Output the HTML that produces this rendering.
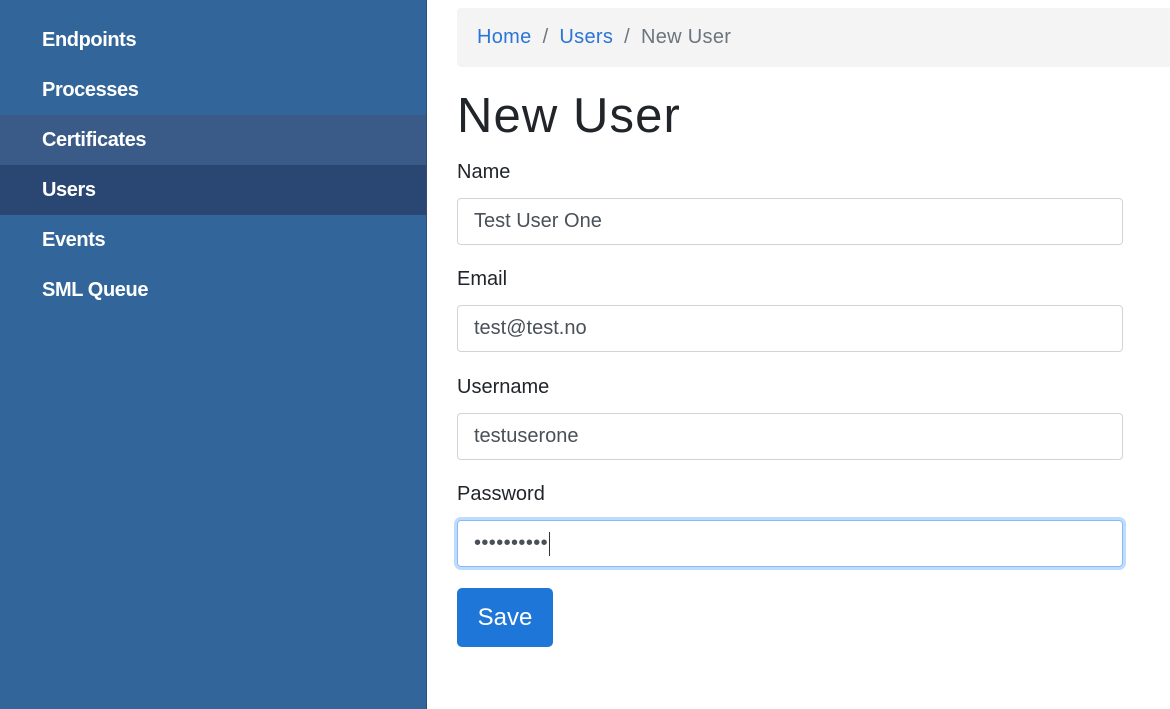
<!DOCTYPE html>
<html><head><meta charset="utf-8"><style>
*{box-sizing:border-box;margin:0;padding:0}
body{width:1170px;height:709px;overflow:hidden;background:#fff;font-family:"Liberation Sans","DejaVu Sans",sans-serif;position:relative}
.side{position:absolute;left:0;top:0;width:427px;height:709px;background:#32659a;border-right:1px solid #2a4e78}
.side div{position:absolute;left:0;width:426px;height:50px;line-height:50px;padding-left:42px;color:#fff;font-weight:bold;font-size:20px;letter-spacing:-0.4px}
.crumb{position:absolute;left:457px;top:8px;width:730px;height:59px;background:#f4f4f4;border-radius:4px;font-size:20px;line-height:59px;padding-left:20px;color:#6c757d;letter-spacing:0.3px}
.crumb a{color:#2a75d6;text-decoration:none}
.crumb span{margin:0 11px}
h1{position:absolute;left:457px;top:88px;font-size:49px;font-weight:normal;color:#212529;letter-spacing:1.1px}
label{position:absolute;left:457px;font-size:20px;color:#212529}
.in{position:absolute;left:457px;width:666px;height:47px;border:1px solid #ced4da;border-radius:4px;font-size:20px;color:#495057;line-height:45px;padding-left:16px}
.focus{border-color:#80bdff;box-shadow:0 0 0 3px #bfdcfd}
.btn{position:absolute;left:457px;top:588px;width:96px;height:59px;background:#1e76d9;border-radius:5px;color:#fff;font-size:24px;text-align:center;line-height:59px}
</style></head><body>
<div class="side">
<div style="top:15px">Endpoints</div>
<div style="top:65px">Processes</div>
<div style="top:115px;background:#3a5b88">Certificates</div>
<div style="top:165px;background:#2a4672">Users</div>
<div style="top:215px">Events</div>
<div style="top:265px">SML Queue</div>
</div>
<div class="crumb"><a>Home</a><span>/</span><a>Users</a><span>/</span>New User</div>
<h1>New User</h1>
<label style="top:161px">Name</label>
<div class="in" style="top:198px">Test User One</div>
<label style="top:268px">Email</label>
<div class="in" style="top:305px">test@test.no</div>
<label style="top:376px">Username</label>
<div class="in" style="top:413px">testuserone</div>
<label style="top:483px">Password</label>
<div class="in focus" style="top:520px;font-size:20px;letter-spacing:0.4px">••••••••••<span style="display:inline-block;width:1px;height:24px;background:#333;vertical-align:middle;margin-left:1px"></span></div>
<div class="btn">Save</div>
</body></html>
